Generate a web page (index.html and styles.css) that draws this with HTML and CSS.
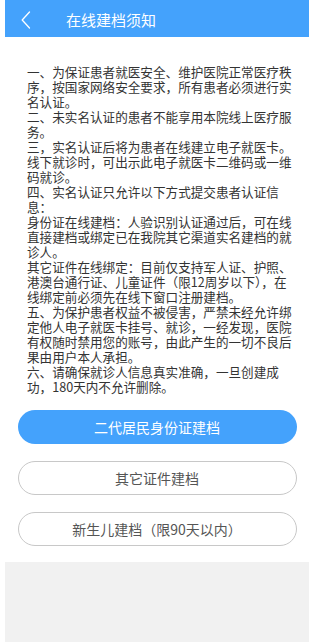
FILE: index.html
```html
<!DOCTYPE html>
<html lang="zh-CN">
<head>
<meta charset="utf-8">
<meta name="viewport" content="width=320">
<link rel="stylesheet" href="styles.css">
<title>在线建档须知</title>
</head>
<body>
<div class="app">
  <header class="topbar">
    <span class="back">
      <svg width="10" height="18" viewBox="0 0 10 18"><path d="M8.5 1 L1.2 9 L8.5 17" fill="none" stroke="#fff" stroke-width="1.3" stroke-linecap="round" stroke-linejoin="round"/></svg>
    </span>
    <h1 class="title">在线建档须知</h1>
  </header>
  <main class="content">
    <div class="notice">
      <p>一、为保证患者就医安全、维护医院正常医疗秩序，按国家网络安全要求，所有患者必须进行实名认证。</p>
      <p>二、未实名认证的患者不能享用本院线上医疗服务。</p>
      <p>三，实名认证后将为患者在线建立电子就医卡。线下就诊时，可出示此电子就医卡二维码或一维码就诊。</p>
      <p>四、实名认证只允许以下方式提交患者认证信息：</p>
      <p>身份证在线建档：人验识别认证通过后，可在线直接建档或绑定已在我院其它渠道实名建档的就诊人。</p>
      <p>其它证件在线绑定：目前仅支持军人证、护照、港澳台通行证、儿童证件（限12周岁以下），在线绑定前必须先在线下窗口注册建档。</p>
      <p>五、为保护患者权益不被侵害，严禁未经允许绑定他人电子就医卡挂号、就诊，一经发现，医院有权随时禁用您的账号，由此产生的一切不良后果由用户本人承担。</p>
      <p>六、请确保就诊人信息真实准确，一旦创建成功，180天内不允许删除。</p>
    </div>
    <div class="actions">
      <button class="btn btn-primary">二代居民身份证建档</button>
      <button class="btn btn-outline">其它证件建档</button>
      <button class="btn btn-outline">新生儿建档（限90天以内）</button>
    </div>
  </main>
  <div class="footer-area"></div>
</div>
</body>
</html>
```
FILE: styles.css
```css
html, body {
  margin: 0;
  padding: 0;
  background: #fff;
}
body {
  font-family: "Noto Sans CJK SC", "Noto Sans", sans-serif;
}
.app {
  width: 304px;
  height: 642px;
  margin-left: 5px;
  display: flex;
  flex-direction: column;
  background: #fff;
}
.topbar {
  height: 37px;
  flex: none;
  background: #44a2fc;
  display: flex;
  align-items: center;
  padding-top: 3px;
  box-sizing: border-box;
}
.back {
  display: flex;
  margin-left: 16px;
  width: 10px;
  height: 18px;
}
.title {
  margin: 0 0 0 35px;
  font-size: 15px;
  font-weight: normal;
  color: #fff;
  line-height: 18px;
}
.content {
  flex: none;
  display: flex;
  flex-direction: column;
}
.notice {
  padding: 27px 0 0 22px;
  width: 266px;
  color: #333;
  font-size: 12.6px;
  line-height: 15px;
}
.notice p {
  margin: 0;
}
.actions {
  display: flex;
  flex-direction: column;
  gap: 17px;
  padding: 16px 0 16px 12.5px;
}
.btn {
  width: 279px;
  height: 34px;
  border-radius: 17px;
  font-family: "Noto Sans CJK SC", "Noto Sans", sans-serif;
  font-size: 14px;
  padding: 0;
  box-sizing: border-box;
  cursor: pointer;
}
.btn-primary {
  background: #44a2fc;
  color: #fff;
  border: none;
}
.btn-outline {
  background: #fff;
  color: #555;
  border: 1px solid #c8c8c8;
}
.footer-area {
  flex: 1;
  background: #f1f1f1;
}
```
